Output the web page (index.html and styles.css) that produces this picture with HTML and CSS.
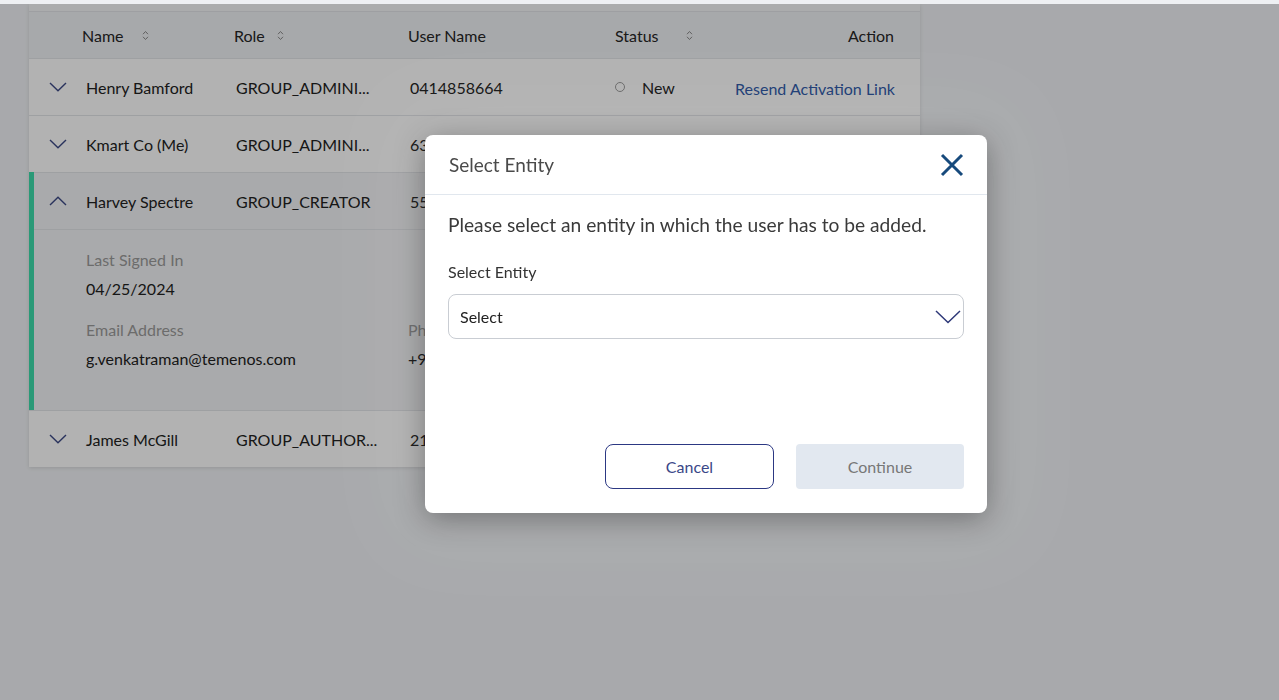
FILE: index.html
```html
<!DOCTYPE html>
<html lang="en">
<head>
  <meta charset="UTF-8">
  <meta name="viewport" content="width=device-width, initial-scale=1.0">
  <title>Users - Select Entity</title>
  <link rel="stylesheet" href="styles.css">
</head>
<body>
<div class="topbar"></div>

<main class="page">
  <section class="users-card">
    <div class="card-lip"></div>

    <div class="grid-row head">
      <span></span>
      <span class="th">Name <svg class="sort sort-name" viewBox="0 0 7 11"><path d="M1 4.2 3.5 1.5 6 4.2M1 6.8 3.5 9.5 6 6.8"/></svg></span>
      <span class="th">Role <svg class="sort sort-role" viewBox="0 0 7 11"><path d="M1 4.2 3.5 1.5 6 4.2M1 6.8 3.5 9.5 6 6.8"/></svg></span>
      <span class="th">User Name</span>
      <span class="th">Status <svg class="sort sort-status" viewBox="0 0 7 11"><path d="M1 4.2 3.5 1.5 6 4.2M1 6.8 3.5 9.5 6 6.8"/></svg></span>
      <span class="th th-action">Action</span>
    </div>

    <div class="grid-row user">
      <span class="toggle"><svg viewBox="0 0 18 10"><path d="M1 1 9 8.8 17 1"/></svg></span>
      <span class="cell name">Henry Bamford</span>
      <span class="cell role">GROUP_ADMINI...</span>
      <span class="cell uname">0414858664</span>
      <span class="cell status"><i class="dot"></i>New</span>
      <span class="action"><a href="#" class="link">Resend Activation Link</a></span>
    </div>

    <div class="grid-row user">
      <span class="toggle"><svg viewBox="0 0 18 10"><path d="M1 1 9 8.8 17 1"/></svg></span>
      <span class="cell name">Kmart Co (Me)</span>
      <span class="cell role">GROUP_ADMINI...</span>
      <span class="cell uname">6391827364</span>
      <span class="cell status"><i class="dot dot-active"></i>Active</span>
      <span class="action"></span>
    </div>

    <div class="user-item open">
      <div class="grid-row user">
        <span class="toggle"><svg viewBox="0 0 18 10"><path d="M1 9 9 1.2 17 9"/></svg></span>
        <span class="cell name">Harvey Spectre</span>
        <span class="cell role">GROUP_CREATOR</span>
        <span class="cell uname">5562019384</span>
        <span class="cell status"><i class="dot dot-active"></i>Active</span>
        <span class="action"></span>
      </div>
      <div class="details">
        <div class="detail-line">
          <div class="field">
            <div class="field-label">Last Signed In</div>
            <div class="field-value">04/25/2024</div>
          </div>
        </div>
        <div class="detail-line">
          <div class="field">
            <div class="field-label">Email Address</div>
            <div class="field-value">g.venkatraman@temenos.com</div>
          </div>
          <div class="field field-narrow">
            <div class="field-label">Phone Number</div>
            <div class="field-value">+91 9884012345</div>
          </div>
        </div>
      </div>
    </div>

    <div class="grid-row user">
      <span class="toggle"><svg viewBox="0 0 18 10"><path d="M1 1 9 8.8 17 1"/></svg></span>
      <span class="cell name">James McGill</span>
      <span class="cell role">GROUP_AUTHOR...</span>
      <span class="cell uname">2148392011</span>
      <span class="cell status"><i class="dot dot-active"></i>Active</span>
      <span class="action"></span>
    </div>
  </section>
</main>

<div class="overlay">
  <div class="modal" role="dialog" aria-labelledby="modalTitle">
    <div class="modal-header">
      <h2 id="modalTitle">Select Entity</h2>
      <button class="close-btn" aria-label="Close">
        <svg viewBox="0 0 24 24"><path d="M2 2 22 22M22 2 2 22"/></svg>
      </button>
    </div>
    <div class="modal-body">
      <p class="intro">Please select an entity in which the user has to be added.</p>
      <label class="select-label" for="entity">Select Entity</label>
      <div class="select-box" id="entity">
        <span>Select</span>
        <svg viewBox="0 0 26 14"><path d="M1 1 13 12.5 25 1"/></svg>
      </div>
    </div>
    <div class="modal-footer">
      <button class="btn btn-outline">Cancel</button>
      <button class="btn btn-disabled" disabled>Continue</button>
    </div>
  </div>
</div>
</body>
</html>
```

FILE: styles.css
```css
* {
  margin: 0;
  padding: 0;
  box-sizing: border-box;
}

body {
  font-family: 'Lato', 'Noto Sans', sans-serif;
  background: #f1f3f6;
  color: #222;
  min-height: 100vh;
  font-size: 16px;
}

.topbar {
  position: relative;
  z-index: 20;
  height: 4px;
  background: #eef0f3;
}

.page {
  padding: 0 359px 0 29px;
}

.users-card {
  background: #fff;
  box-shadow: 0 1px 4px rgba(0, 0, 0, 0.12);
}

.card-lip {
  height: 8px;
  background: #f5f6f8;
  border-bottom: 1px solid #e2e4e8;
}

.grid-row {
  display: grid;
  grid-template-columns: 53px 152px 174px 207px 120px 1fr;
  align-items: center;
}

.head {
  height: 46px;
  background: #f0f2f5;
  color: #262626;
}

.th {
  display: flex;
  align-items: center;
  white-space: nowrap;
}

.th-action {
  justify-content: flex-end;
  padding-right: 26px;
}

.sort {
  width: 7px;
  height: 11px;
  fill: none;
  stroke: #8a8a8a;
  stroke-width: 1;
}

.sort-name { margin-left: 18px; }
.sort-role { margin-left: 12px; }
.sort-status { margin-left: 27px; }

.user {
  height: 57px;
  border-top: 1px solid #e3e5e9;
}

.toggle {
  padding-left: 20px;
  display: flex;
  align-items: center;
}

.toggle svg {
  width: 18px;
  height: 10px;
  fill: none;
  stroke: #3d4a86;
  stroke-width: 1.4;
}

.cell {
  white-space: nowrap;
  overflow: hidden;
}

.name { padding-left: 4px; }
.role { padding-left: 2px; }
.uname { padding-left: 2px; }

.status {
  display: flex;
  align-items: center;
  gap: 17px;
}

.dot {
  width: 10px;
  height: 10px;
  border: 1.3px solid #9a9a9a;
  border-radius: 50%;
}

.dot-active {
  border-color: #3ccf9f;
  background: #3ccf9f;
}

.action {
  text-align: right;
  white-space: nowrap;
  padding: 3px 25px 0 0;
}

.link {
  color: #2d58a8;
  text-decoration: none;
}

.user-item.open {
  background: #f3f4f6;
  border-left: 5px solid #3ddcab;
}

.user-item.open .grid-row {
  grid-template-columns: 48px 152px 174px 207px 120px 1fr;
}

.user-item.open .toggle {
  padding-left: 15px;
}

.details {
  border-top: 1px solid #e3e5e9;
  height: 181px;
  padding: 20px 0 0 52px;
}

.detail-line {
  display: flex;
  margin-bottom: 21px;
}

.field {
  width: 322px;
}

.field-narrow {
  width: 200px;
}

.field-label {
  color: #9b9b9b;
  line-height: 20px;
  margin-bottom: 9px;
}

.field-value {
  line-height: 20px;
}

/* modal */

.overlay {
  position: fixed;
  inset: 0;
  z-index: 10;
  background: rgba(0, 0, 0, 0.3);
  display: flex;
  justify-content: center;
  align-items: flex-start;
  padding: 135px 0 0 133px;
}

.modal {
  width: 562px;
  background: #fff;
  border-radius: 8px;
  box-shadow: 0 6px 30px rgba(0, 0, 0, 0.34), 0 0 80px 25px rgba(255, 255, 255, 0.06);
}

.modal-header {
  height: 60px;
  display: flex;
  align-items: center;
  justify-content: space-between;
  padding: 0 23px 0 24px;
  border-bottom: 1px solid #e1e7ee;
}

.modal-header h2 {
  font-size: 19px;
  font-weight: 400;
  color: #4a4a4a;
}

.close-btn {
  border: none;
  background: none;
  width: 24px;
  height: 24px;
  cursor: pointer;
}

.close-btn svg {
  width: 24px;
  height: 24px;
  fill: none;
  stroke: #174a7c;
  stroke-width: 3;
}

.modal-body {
  padding: 17px 23px 0 23px;
  height: 249px;
}

.intro {
  font-size: 19.2px;
  color: #3a3a3a;
  line-height: 26px;
  margin-bottom: 24px;
}

.select-label {
  display: block;
  font-size: 16px;
  color: #333;
  line-height: 20px;
  margin-bottom: 12px;
}

.select-box {
  height: 45px;
  border: 1px solid #c9cdd3;
  border-radius: 8px;
  display: flex;
  align-items: center;
  justify-content: space-between;
  padding: 0 2px 0 11px;
  color: #222;
}

.select-box svg {
  width: 26px;
  height: 14px;
  fill: none;
  stroke: #2e3878;
  stroke-width: 1.5;
}

.modal-footer {
  display: flex;
  justify-content: flex-end;
  gap: 22px;
  padding: 0 23px 24px;
}

.btn {
  width: 169px;
  height: 45px;
  font-family: inherit;
  font-size: 16px;
  border-radius: 8px;
  cursor: pointer;
}

.btn-outline {
  background: #fff;
  border: 1px solid #2c3883;
  color: #3a4788;
}

.btn-disabled {
  width: 168px;
  background: #e2e8f0;
  border: none;
  border-radius: 4px;
  color: #777;
  cursor: default;
}
```
